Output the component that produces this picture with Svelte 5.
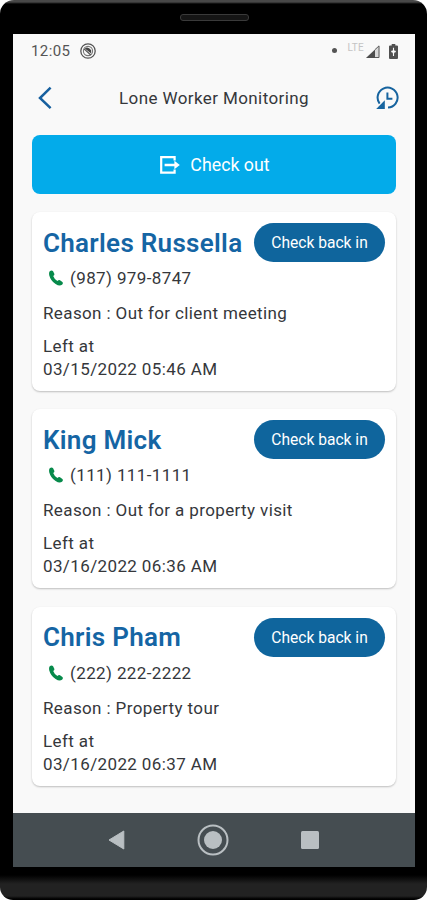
<script lang="ts">
    interface Worker {
        name: string;
        phone: string;
        reason: string;
        leftAt: string;
    }

    const workers: Worker[] = [
        {
            name: "Charles Russella",
            phone: "(987) 979-8747",
            reason: "Out for client meeting",
            leftAt: "03/15/2022 05:46 AM",
        },
        {
            name: "King Mick",
            phone: "(111) 111-1111",
            reason: "Out for a property visit",
            leftAt: "03/16/2022 06:36 AM",
        },
        {
            name: "Chris Pham",
            phone: "(222) 222-2222",
            reason: "Property tour",
            leftAt: "03/16/2022 06:37 AM",
        },
    ];
</script>

<div class="phone">
    <div class="bezel-top"><span class="speaker"></span></div>

    <div class="screen">
        <!-- Status bar -->
        <div class="status">
            <span class="time">12:05</span>
            <svg class="status-app" viewBox="0 0 16 16" width="16" height="16">
                <circle cx="8" cy="8" r="7.2" fill="none" stroke="#555" stroke-width="1.3" />
                <circle cx="8" cy="8" r="4.6" fill="none" stroke="#777" stroke-width="1.1" />
                <path d="M4.8 5.4Q8 3.2 11.2 7.2v3.4z" fill="#444" />
                <path d="M4.2 6l6.6 6" stroke="#555" stroke-width="1.1" />
            </svg>
            <span class="dot"></span>
            <span class="lte">LTE</span>
            <svg class="signal" viewBox="0 0 14 13" width="14" height="13">
                <path d="M0 13 13.4.4V13z" fill="#d8d8d8" />
                <path d="M0 13 9 4.6V13z" fill="#4d4d4d" />
                <path d="M9 4.6 13 .9v11.6H9" fill="none" stroke="#5a5a5a" stroke-width="1" />
            </svg>
            <svg class="battery" viewBox="0 0 9 15" width="9" height="15">
                <path d="M2.7 0h3.6v1.6H8q1 0 1 1V14q0 1-1 1H1q-1 0-1-1V2.6q0-1 1-1h1.7z" fill="#505050" />
                <path d="M4.5 3.8v8.2M2.2 7.6h4.6M3 6.4l1.5 3L6 6.4" fill="none" stroke="#fafafa" stroke-width="1.1" />
            </svg>
        </div>

        <!-- App header -->
        <header class="header">
            <svg class="back" viewBox="0 0 14 24" width="14" height="24">
                <path d="M12.6 1.6 2 12l10.6 10.2" fill="none" stroke="#17609f" stroke-width="2.5" />
            </svg>
            <h1>Lone Worker Monitoring</h1>
            <svg class="history" viewBox="0 0 24 24" width="24" height="24">
                <path d="M4.6 17.6A10 10 0 1 1 13 21.6" fill="none" stroke="#17649f" stroke-width="2" />
                <path d="M1.2 23H9.8V14.2z" fill="#17649f" />
                <path d="M12.4 6.4v6.4h5" fill="none" stroke="#17649f" stroke-width="2" />
            </svg>
        </header>

        <main>
            <button class="checkout">
                <svg viewBox="0 0 20 18" width="20" height="18">
                    <path d="M14.6 4.6V1.2H1.2v15.4h13.4v-3.2" fill="none" stroke="#fff" stroke-width="2.2" />
                    <path d="M4.6 9h11" fill="none" stroke="#fff" stroke-width="2.6" />
                    <path d="M14.4 4.8 19.8 9l-5.4 4.2z" fill="#fff" />
                </svg>
                <span>Check out</span>
            </button>

            {#each workers as worker}
                <section class="card">
                    <div class="card-head">
                        <h2>{worker.name}</h2>
                        <button class="checkin">Check back in</button>
                    </div>
                    <div class="phone-row">
                        <svg viewBox="0 0 14 16" width="14" height="16">
                            <path
                                d="M1 .9Q3-.2 4.1 1.2L5.4 4Q5.6 5.2 4.2 6.1 5.3 9.3 8.4 11.1 9.8 9.4 11 10.2L13.4 12Q14.5 13.4 13 14.7 10.6 16.6 6.6 14 1.7 10.9.2 5.2-.3 2 1 .9z"
                                fill="#078a4b"
                            />
                        </svg>
                        <span>{worker.phone}</span>
                    </div>
                    <p class="reason">Reason : {worker.reason}</p>
                    <p class="left">Left at</p>
                    <p class="date">{worker.leftAt}</p>
                </section>
            {/each}
        </main>

        <!-- Android navigation -->
        <nav>
            <svg viewBox="0 0 17 20" width="17" height="20">
                <path d="M15.8 1v18L1 10z" fill="#b9bfc2" stroke="#b9bfc2" stroke-linejoin="round" />
            </svg>
            <svg viewBox="0 0 32 32" width="32" height="32">
                <circle cx="16" cy="16" r="14.5" fill="none" stroke="#b9bfc2" stroke-width="2" />
                <circle cx="16" cy="16" r="9" fill="#b9bfc2" />
            </svg>
            <svg viewBox="0 0 18 18" width="18" height="18">
                <rect width="18" height="18" rx="1.5" fill="#b9bfc2" />
            </svg>
        </nav>
    </div>
</div>

<style>
    :global(body) {
        background: #fff;
    }

    .phone {
        box-sizing: border-box;
        width: 427px;
        height: 900px;
        padding: 0 12px 0 13px;
        overflow: hidden;
        border-radius: 14px 14px 13px 13px;
        background: linear-gradient(#484848 0 2px, #000 4px 875px, #222 884px 896px, #000 899px);
        font-family: Roboto, "Liberation Sans", sans-serif;
        color: #35373b;
    }

    .bezel-top {
        display: flex;
        justify-content: center;
        box-sizing: border-box;
        height: 34px;
        padding: 14px 0 0 1px;
    }

    .speaker {
        box-sizing: border-box;
        width: 69px;
        height: 7px;
        border: 1px solid #3a3a3a;
        border-radius: 3px;
        background: #151515;
    }

    .screen {
        display: flex;
        flex-direction: column;
        box-sizing: border-box;
        width: 402px;
        height: 833px;
        background: #f9f9f9;
    }

    /* ── Status bar ── */
    .status {
        display: flex;
        align-items: center;
        box-sizing: border-box;
        height: 34px;
        padding: 0 17px 0 18px;
        color: #555;
    }

    .time {
        width: 49px;
        font-size: 15px;
        letter-spacing: 0.4px;
    }

    .dot {
        width: 5px;
        height: 5px;
        margin: 0 0 1px auto;
        border-radius: 50%;
        background: #555;
    }

    .lte {
        margin: -7px 2px 0 10px;
        font-size: 10px;
        letter-spacing: 0.3px;
        color: #c4c4c4;
    }

    .battery {
        margin-left: 9px;
    }

    /* ── Header ── */
    .header {
        display: flex;
        align-items: center;
        justify-content: space-between;
        height: 60px;
        padding: 0 16px 0 25px;
    }

    h1 {
        margin: 0;
        padding-left: 1px;
        font-size: 17px;
        font-weight: 400;
        letter-spacing: 0.4px;
    }

    main {
        flex: 1;
        padding: 7px 19px 0;
    }

    button {
        border: 0;
        font-family: inherit;
        color: #fff;
    }

    .checkout {
        display: flex;
        align-items: center;
        justify-content: center;
        gap: 10px;
        width: 364px;
        height: 59px;
        margin-bottom: 18px;
        padding: 0 4px 0 6px;
        border-radius: 8px;
        background: #03abea;
        font-size: 17.8px;
    }

    /* ── Worker card ── */
    .card {
        box-sizing: border-box;
        height: 179px;
        margin-bottom: 18.3px;
        padding: 11px 11px 0;
        border-radius: 8px;
        background: #fff;
        box-shadow: 0 1px 2px rgba(0, 0, 0, 0.24);
    }

    .card-head {
        display: flex;
        align-items: center;
        justify-content: space-between;
        height: 39px;
    }

    h2 {
        margin: 0;
        font-size: 26px;
        font-weight: 600;
        letter-spacing: 0.3px;
        color: #1565a4;
        white-space: nowrap;
    }

    .checkin {
        flex: none;
        width: 131px;
        height: 39px;
        padding: 1px 0 0;
        border-radius: 20px;
        background: #0f659d;
        font-size: 15.6px;
    }

    .phone-row {
        display: flex;
        align-items: center;
        gap: 7px;
        height: 32px;
        padding-left: 6px;
        font-size: 17px;
        letter-spacing: 0.38px;
    }

    p {
        margin: 0;
        font-size: 17px;
        line-height: 23px;
        letter-spacing: 0.38px;
        white-space: nowrap;
    }

    .reason {
        margin-top: 8px;
    }

    .left {
        margin-top: 10px;
    }

    /* ── Navigation bar ── */
    nav {
        display: flex;
        align-items: center;
        justify-content: space-between;
        box-sizing: border-box;
        height: 54px;
        padding: 0 96px 0 95px;
        background: #454d51;
    }
</style>
